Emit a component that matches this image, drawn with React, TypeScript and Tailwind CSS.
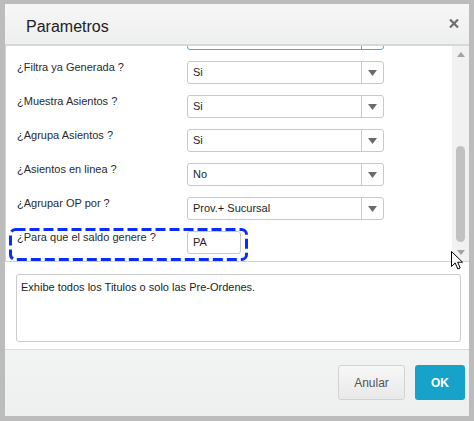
import React from 'react';

type Row = {
  label: string;
  value: string;
  kind: 'select' | 'input';
  focused?: boolean;
};

const rows: Row[] = [
  { label: '', value: '', kind: 'select', focused: true },
  { label: '¿Filtra ya Generada ?', value: 'Si', kind: 'select' },
  { label: '¿Muestra Asientos ?', value: 'Si', kind: 'select' },
  { label: '¿Agrupa Asientos ?', value: 'Si', kind: 'select' },
  { label: '¿Asientos en linea ?', value: 'No', kind: 'select' },
  { label: '¿Agrupar OP por ?', value: 'Prov.+ Sucursal', kind: 'select' },
  { label: '¿Para que el saldo genere ?', value: 'PA', kind: 'input' },
];

const Caret = () => (
  <svg width="9" height="6" viewBox="0 0 9 6">
    <path d="M0 0h9L4.5 6z" fill="#6b6b6b" />
  </svg>
);

const SelectBox: React.FC<{ value: string; focused?: boolean }> = ({ value, focused }) => (
  <div
    className={
      focused
        ? 'flex h-[23px] w-[197px] rounded-[3px] border border-[#3ab4d6] bg-white'
        : 'flex h-[23px] w-[197px] rounded-[3px] border border-[#c9c9c9] bg-white'
    }
  >
    <div className="flex flex-1 items-center pl-[5px] text-[11px] text-[#1e1e1e]">{value}</div>
    <div
      className={
        focused
          ? 'flex w-[22px] items-center justify-center border-l border-[#3ab4d6]'
          : 'flex w-[22px] items-center justify-center border-l border-[#c9c9c9]'
      }
    >
      <Caret />
    </div>
  </div>
);

const InputBox: React.FC<{ value: string }> = ({ value }) => (
  <div className="flex h-[23px] w-[54px] items-center rounded-[3px] border border-[#c9c9c9] bg-white pl-[5px] text-[11px] text-[#1e1e1e]">
    {value}
  </div>
);

export default function App() {
  return (
    <div className="relative h-[421px] w-[474px] bg-[#bcbcbc] pb-[5px] pl-[5px] pr-[5px] pt-[4px] font-['Liberation_Sans',Arial,sans-serif]">
      <div className="flex h-full flex-col bg-white">
        {/* header */}
        <div className="flex h-[42px] shrink-0 justify-between border-b-2 border-[#d8d8d8] bg-gradient-to-b from-[#f6f6f6] to-[#eeefef] pl-[21px] pr-[10px]">
          <div className="pt-[14px] text-[16px] leading-[18px] text-[#222]">Parametros</div>
          <div className="pt-[15px]">
            <svg width="10" height="9" viewBox="0 0 10 9">
              <path d="M1 0.5l8 8M9 0.5l-8 8" stroke="#6e6e6e" strokeWidth="2.2" />
            </svg>
          </div>
        </div>

        {/* scroll area */}
        <div className="relative flex h-[216px] shrink-0 overflow-hidden border-b border-l border-[#d2d2d2]">
          <div className="flex-1 overflow-hidden pl-[11px]">
            <div className="-mt-[19px] flex flex-col gap-[11px]">
              {rows.map((r, i) => (
                <div key={i} className="flex items-start">
                  <div className="w-[170px] text-[11px] leading-[13px] text-[#2a2a2a]">{r.label}</div>
                  {r.kind === 'select' ? (
                    <SelectBox value={r.value} focused={r.focused} />
                  ) : (
                    <InputBox value={r.value} />
                  )}
                </div>
              ))}
            </div>
          </div>

          {/* scrollbar */}
          <div className="flex w-[17px] shrink-0 flex-col items-center bg-[#f1f1f1]">
            <svg className="mt-[6px]" width="8" height="5" viewBox="0 0 8 5">
              <path d="M0 5h8L4 0z" fill="#a3a3a3" />
            </svg>
            <div className="mt-[89px] h-[96px] w-[9px] rounded-[5px] bg-[#c1c1c1]" />
            <svg className="mt-[8px]" width="8" height="5" viewBox="0 0 8 5">
              <path d="M0 0h8L4 5z" fill="#a3a3a3" />
            </svg>
          </div>

          {/* annotation box */}
          <svg className="absolute left-[2px] top-[181px]" width="242" height="35" viewBox="0 0 242 35">
            <rect
              x="2.5"
              y="2.5"
              width="236"
              height="30"
              rx="5"
              fill="none"
              stroke="#0a2cff"
              strokeWidth="3"
              strokeDasharray="10 4"
            />
          </svg>
        </div>

        {/* description */}
        <div className="flex-1 pl-[11px] pr-[8px] pt-[12px]">
          <div className="h-[68px] rounded-[3px] border border-[#cbcbcb] pl-[4px] pt-[6px] text-[11px] leading-[13px] text-[#1e1e1e]">
            Exhibe todos los Titulos o solo las Pre-Ordenes.
          </div>
        </div>

        {/* footer */}
        <div className="flex h-[67px] shrink-0 items-start justify-end gap-[10px] border-t border-[#dcdcdc] bg-gradient-to-b from-[#f2f3f3] to-[#eeefef] pr-[4px] pt-[15px]">
          <button className="h-[35px] w-[67px] rounded-[3px] border border-[#d3d3d3] bg-gradient-to-b from-[#f7f7f7] to-[#e9e9e9] text-[12px] text-[#555]">
            Anular
          </button>
          <button className="h-[35px] w-[50px] rounded-[3px] bg-[#17a2c9] text-[12px] font-bold text-white">OK</button>
        </div>
      </div>

      {/* mouse cursor */}
      <svg className="absolute left-[451px] top-[251px]" width="13" height="20" viewBox="0 0 13 20">
        <path
          d="M0.5 0.5V15.5L4.2 12L6.8 18L9.2 17L6.7 11.2H11.5Z"
          fill="#fff"
          stroke="#000"
          strokeWidth="1"
          strokeLinejoin="round"
        />
      </svg>
    </div>
  );
}
